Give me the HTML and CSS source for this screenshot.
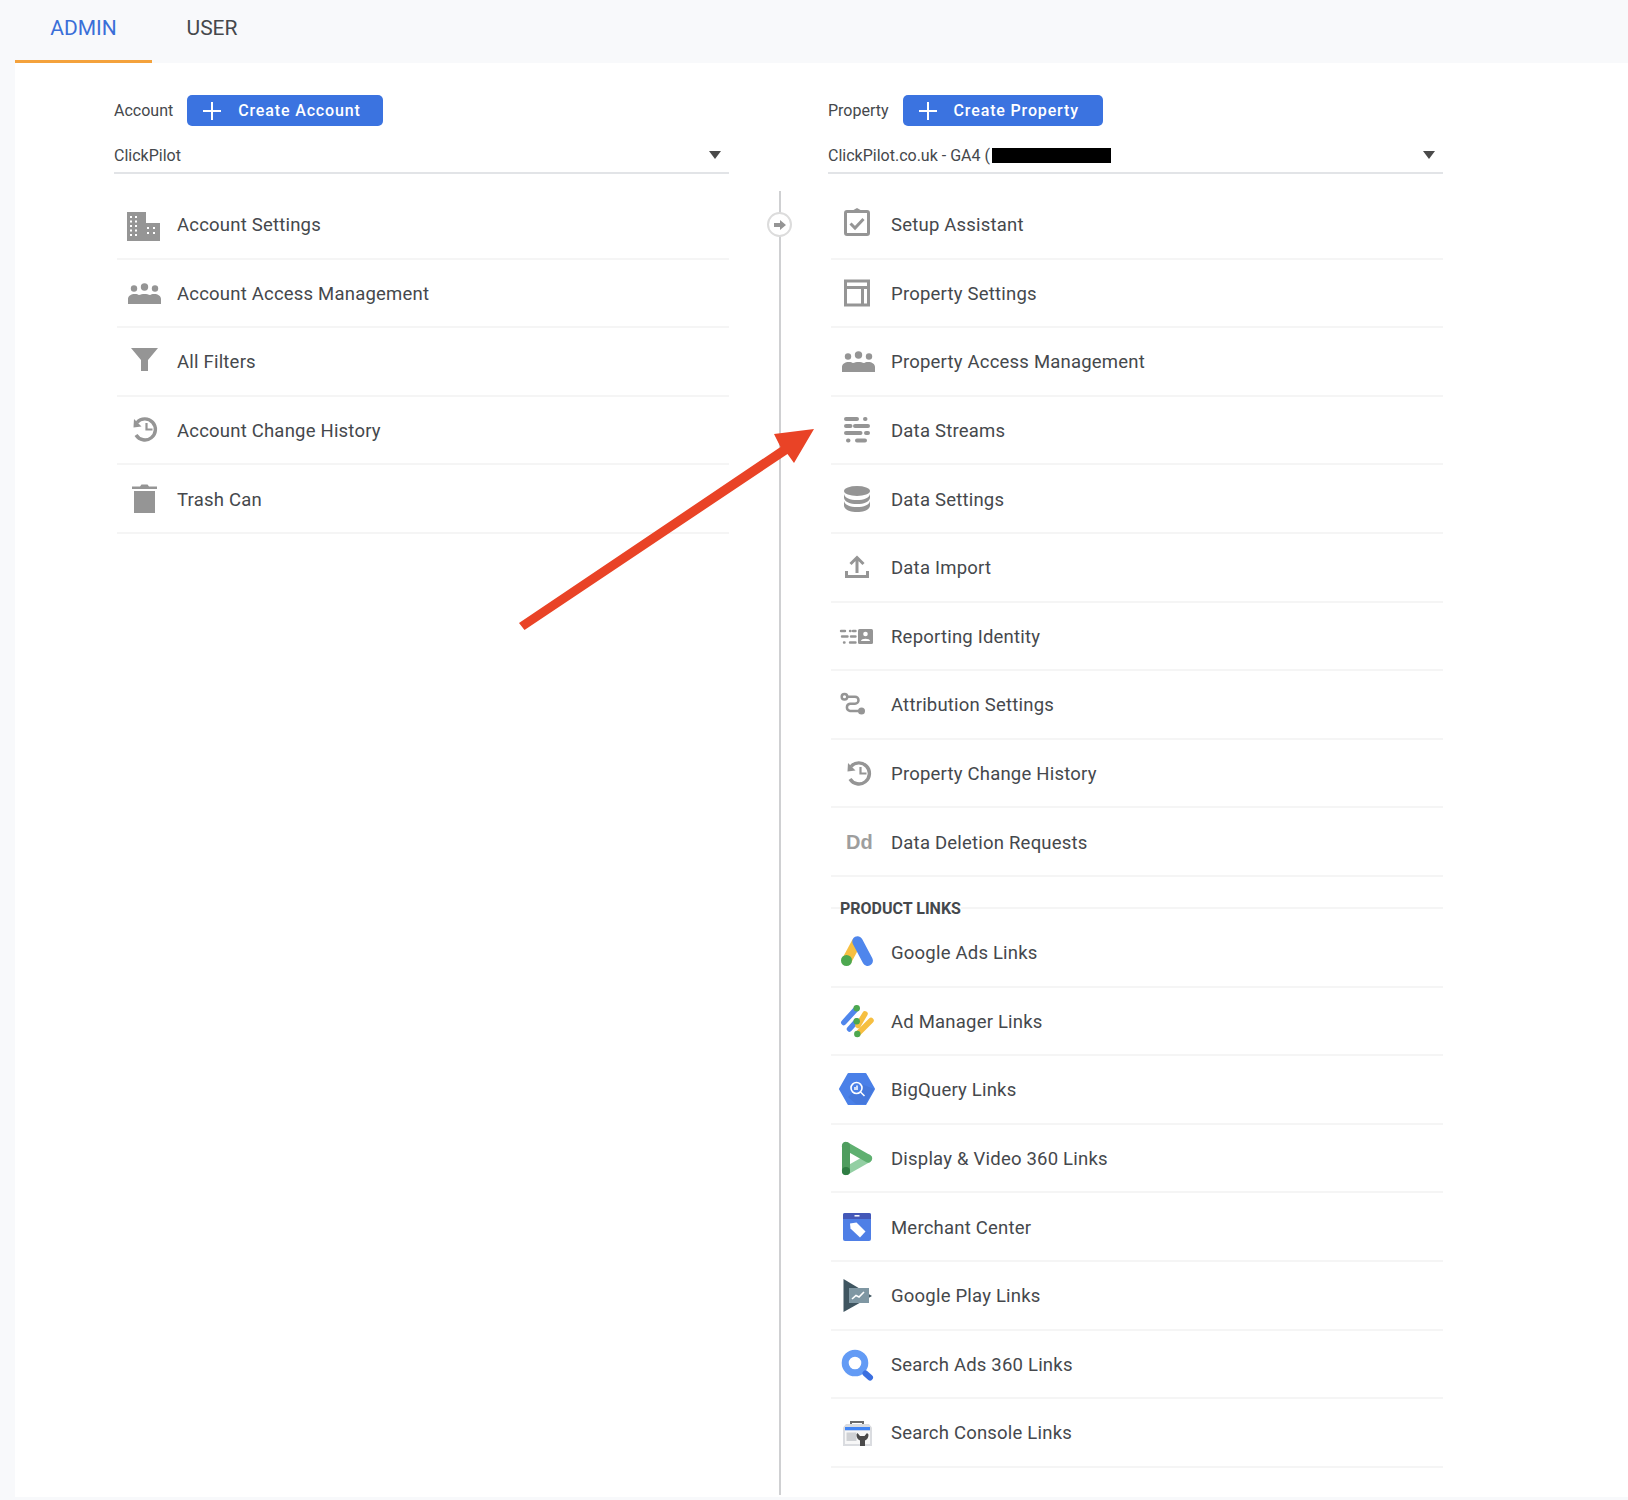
FILE: index.html
```html
<!DOCTYPE html>
<html lang="en">
<head>
    <meta charset="UTF-8">
    <title>Admin - Analytics</title>
    <link rel="stylesheet" href="styles.css">
</head>
<body>
    <div class="tabs">
        <div class="tab active">ADMIN</div>
        <div class="tab">USER</div>
    </div>

    <div class="main">
        <!-- Account column -->
        <div class="column">
            <div class="column-head">
                <span class="column-label">Account</span>
                <button class="btn btn-account">
                    <svg class="btn-plus" viewBox="0 0 18 18"><path d="M9 0v18M0 9h18"/></svg>
                    Create Account
                </button>
            </div>
            <div class="picker">
                <span>ClickPilot</span>
                <span class="caret"></span>
            </div>
            <div class="list">
                <div class="row">
                    <div class="icon">
                        <svg viewBox="0 0 36 36"><path class="fill" d="M1 6h19v11h14v18H1z"/><path class="holes" d="M4 10h2v2H4zM9 10h2v2H9zM4 14.500h2v2H4zM9 14.500h2v2H9zM4 19h2v2H4zM9 19h2v2H9zM4 23.500h2v2H4zM9 23.500h2v2H9zM4 28h2v2H4zM9 28h2v2H9zM21 21h2v2h-2zM27 21h2v2h-2zM21 26h2v2h-2zM27 26h2v2h-2z"/></svg>
                    </div>
                    <span>Account Settings</span>
                </div>
                <div class="row">
                    <div class="icon"><svg viewBox="0 0 36 36"><use href="#people"/></svg></div>
                    <span>Account Access Management</span>
                </div>
                <div class="row">
                    <div class="icon">
                        <svg viewBox="0 0 36 36"><path class="fill" d="M5 5h27l-10 12v11h-7V17z"/></svg>
                    </div>
                    <span>All Filters</span>
                </div>
                <div class="row">
                    <div class="icon"><svg viewBox="0 0 36 36"><use href="#history"/></svg></div>
                    <span>Account Change History</span>
                </div>
                <div class="row">
                    <div class="icon">
                        <svg viewBox="0 0 36 36"><path class="fill" d="M8 10h21v22H8zM6 5.500h8l1.500-2h6l1.500 2h8V8H6z"/></svg>
                    </div>
                    <span>Trash Can</span>
                </div>
            </div>
        </div>

        <div class="divider">
            <div class="divider-knob">
                <svg viewBox="0 0 12 10"><path class="fill" d="M0 3h6V0l6 5-6 5V7H0z"/></svg>
            </div>
        </div>

        <!-- Property column -->
        <div class="column">
            <div class="column-head">
                <span class="column-label">Property</span>
                <button class="btn btn-property">
                    <svg class="btn-plus" viewBox="0 0 18 18"><path d="M9 0v18M0 9h18"/></svg>
                    Create Property
                </button>
            </div>
            <div class="picker">
                <span>ClickPilot.co.uk - GA4 (<span class="redacted"></span></span>
                <span class="caret"></span>
            </div>
            <div class="list">
                <div class="row">
                    <div class="icon">
                        <svg viewBox="0 0 36 36"><rect class="line thick" x="5.500" y="5.500" width="23" height="23" rx="1.500"/><path class="fill" d="M12.500 7l1-3 3.500-2 3.500 2 1 3z"/><path class="line thick" d="M10.500 17.500l4.500 4.500 8.500-9"/></svg>
                    </div>
                    <span>Setup Assistant</span>
                </div>
                <div class="row">
                    <div class="icon">
                        <svg viewBox="0 0 36 36"><path class="line thick" d="M5.500 6h23v24h-23zM5.500 12.500h23M22.500 12.500V30"/></svg>
                    </div>
                    <span>Property Settings</span>
                </div>
                <div class="row">
                    <div class="icon"><svg viewBox="0 0 36 36"><use href="#people"/></svg></div>
                    <span>Property Access Management</span>
                </div>
                <div class="row">
                    <div class="icon">
                        <svg viewBox="0 0 36 36"><path class="dash" d="M6 7h11M25 7h.500M6 14h4.500M15 14h13M6 21h14.500M26 21h2M8 28.500h.500M17 28.500h8"/></svg>
                    </div>
                    <span>Data Streams</span>
                </div>
                <div class="row">
                    <div class="icon">
                        <svg viewBox="0 0 36 36"><ellipse class="fill" cx="17" cy="10" rx="13" ry="5"/><path class="fill" d="M4 13c1 4 6 6 13 6s12-2 13-6v4c-1 4-6 6-13 6s-12-2-13-6zM4 20c1 4 6 6 13 6s12-2 13-6v5c-1 4-6 6-13 6s-12-2-13-6z"/></svg>
                    </div>
                    <span>Data Settings</span>
                </div>
                <div class="row">
                    <div class="icon">
                        <svg viewBox="0 0 36 36"><path class="line thick" d="M6.500 22v5.500h21V22M17 24V9.500M10.500 15L17 8.500l6.500 6.500"/></svg>
                    </div>
                    <span>Data Import</span>
                </div>
                <div class="row">
                    <div class="icon">
                        <svg viewBox="0 0 36 36"><path class="dash-thin" d="M1 13h4M10 13h.500M13 13h2.500M2 18.500h5.500M11 18.500h4.500M4 24.500h.500M10 24.500h5.500"/><rect class="fill" x="18" y="11" width="15" height="15" rx="1.500"/><circle class="holes" cx="25.500" cy="16" r="2.300"/><path class="holes" d="M21 23c0-3 9-3 9 0z"/></svg>
                    </div>
                    <span>Reporting Identity</span>
                </div>
                <div class="row">
                    <div class="icon">
                        <svg viewBox="0 0 36 36"><circle class="line" cx="4.500" cy="10.700" r="2.800"/><circle class="fill" cx="21.500" cy="25" r="3.500"/><path class="line" d="M7 10.700h8a3.500 3.500 0 0 1 0 7h-5a3.700 3.700 0 0 0 0 7.300h9"/></svg>
                    </div>
                    <span>Attribution Settings</span>
                </div>
                <div class="row">
                    <div class="icon"><svg viewBox="0 0 36 36"><use href="#history" x="0" y="1"/></svg></div>
                    <span>Property Change History</span>
                </div>
                <div class="row">
                    <div class="icon dd">Dd</div>
                    <span>Data Deletion Requests</span>
                </div>
            </div>

            <div class="section-head"><b>PRODUCT LINKS</b></div>
            <div class="list">
                <div class="row">
                    <div class="icon">
                        <svg viewBox="0 0 36 36"><path class="logo" stroke="#f6bf41" stroke-width="10" d="M17 7.500L6.500 27"/><path class="logo round" stroke="#4f86ec" stroke-width="10.500" d="M17.500 7.500L27.700 26.700"/><circle cx="6.500" cy="26.500" r="5.500" fill="#4da84f"/></svg>
                    </div>
                    <span>Google Ads Links</span>
                </div>
                <div class="row">
                    <div class="icon">
                        <svg viewBox="0 0 36 36"><g class="logo round" stroke-width="5.500"><path stroke="#4f86ec" d="M3.800 19.500L16.700 5.300M9.500 26L16.700 18"/><path stroke="#f6bf41" d="M18 22.500L25 10.800M17.500 31L31 17.500"/></g><g fill="#4da84f"><circle cx="16.700" cy="5.300" r="3.200"/><circle cx="16.700" cy="18.300" r="3.200"/><circle cx="17.300" cy="31" r="3.200"/></g></svg>
                    </div>
                    <span>Ad Manager Links</span>
                </div>
                <div class="row">
                    <div class="icon">
                        <svg viewBox="0 0 36 36"><path fill="#4a80e8" stroke="#4a80e8" stroke-width="2" stroke-linejoin="round" d="M0 18L8.500 3h17L34 18l-8.500 15h-17z"/><path fill="#3f6fd0" d="M21 13l13 5-8.500 15H16l-8-7z" opacity=".5"/><circle cx="16.500" cy="17" r="5.500" fill="#4a80e8" stroke="#fff" stroke-width="1.600"/><path stroke="#fff" stroke-width="1.500" d="M15 16v3M17 14.500V19M20.500 21l4 4" fill="none"/></svg>
                    </div>
                    <span>BigQuery Links</span>
                </div>
                <div class="row">
                    <div class="icon">
                        <svg viewBox="0 0 36 36"><path class="logo round" stroke="#93cfa3" stroke-width="8" d="M28 18.500L6 31"/><path class="logo round" stroke="#5fb070" stroke-width="8" d="M6 6L28 18.500"/><path class="logo round" stroke="#4f9d5f" stroke-width="8" d="M6 6V31"/><circle cx="6" cy="31" r="4" fill="#2f7d43"/></svg>
                    </div>
                    <span>Display &amp; Video 360 Links</span>
                </div>
                <div class="row">
                    <div class="icon">
                        <svg viewBox="0 0 36 36"><rect x="3" y="4" width="28" height="28" rx="2" fill="#4f7fe6"/><path fill="#4458b8" d="M3 6a2 2 0 0 1 2-2h24a2 2 0 0 1 2 2v4H3z"/><path stroke="#fff" stroke-width="1.500" d="M14.500 6.800h5"/><path fill="#fff" d="M10 14.500l6.500-1 9 9-5.500 6-9.500-9z"/></svg>
                    </div>
                    <span>Merchant Center</span>
                </div>
                <div class="row">
                    <div class="icon">
                        <svg viewBox="0 0 36 36"><path fill="#3f5560" d="M3.500 2L32 19 3.500 35z"/><path fill="#7f97a3" d="M9 11h20v15H9z"/><path class="logo" stroke="#fff" stroke-width="1.600" d="M12 22l4-3.500 3 1.500 5-5"/></svg>
                    </div>
                    <span>Google Play Links</span>
                </div>
                <div class="row">
                    <div class="icon">
                        <svg viewBox="0 0 36 36"><circle cx="15" cy="17" r="9.800" fill="none" stroke="#639bf5" stroke-width="7"/><path class="logo round" stroke="#3b6fe0" stroke-width="6" d="M25.500 27.500l4.500 4"/></svg>
                    </div>
                    <span>Search Ads 360 Links</span>
                </div>
                <div class="row">
                    <div class="icon">
                        <svg viewBox="0 0 36 36"><path fill="none" stroke="#6b6b6b" stroke-width="2" d="M11 11V8h12v3"/><path fill="#dadce0" d="M3 13.500L6 10h23l3 3.500V32H3z"/><path fill="#4285f4" d="M5 13h25v3.500H5z"/><path fill="#f7f7f7" d="M5 16.500h25V30H5z"/><path fill="#cfd1d4" d="M6.500 18.500h10V27h-10z"/><path fill="#4a4a4a" d="M17.500 19l2.500 3h4.500l2.500-3 1.500 1.500c0 3-1 5-3.500 6V32h-5v-5.500c-2.500-1-3.500-3-3.500-6z"/></svg>
                    </div>
                    <span>Search Console Links</span>
                </div>
            </div>
        </div>
    </div>

    <!-- callout drawn over the screenshot -->
    <svg class="callout" viewBox="0 0 320 230">
        <path fill="#e94326" d="M5 207L266.500 31 260 18 300 13 280 47 273.500 38 10.500 214z"/>
    </svg>

    <!-- shared icons -->
    <svg class="defs">
        <symbol id="people" viewBox="0 0 36 36">
            <g fill="#959595">
                <circle cx="8" cy="13.500" r="3.200"/><circle cx="18.500" cy="12" r="3.700"/><circle cx="29" cy="13.500" r="3.200"/>
                <path d="M2 29v-5c0-3 3-5 7-5 2 0 3 .500 4 1 3-1.500 8-1.500 11 0 1-.500 2-1 4-1 4 0 7 2 7 5v5z"/>
            </g>
        </symbol>
        <symbol id="history" viewBox="0 0 36 36">
            <path fill="none" stroke="#959595" stroke-width="3.400" d="M11 10.500a10.500 10.500 0 1 1-1 12.500"/>
            <path fill="#959595" d="M8 7l7.500 7.500L7.500 15.500z"/>
            <path fill="none" stroke="#959595" stroke-width="2.200" d="M20.500 11v6.500h6"/>
        </symbol>
    </svg>
</body>
</html>
```

FILE: styles.css
```css
* {
    margin: 0;
    padding: 0;
    box-sizing: border-box;
}

body {
    font-family: Roboto, "Liberation Sans", sans-serif;
    background: #f8f9fb;
    color: #45484c;
    position: relative;
    height: 1500px;
    overflow: hidden;
}

.tabs {
    display: flex;
    height: 63px;
    padding-left: 15px;
}

.tab {
    width: 120px;
    padding-top: 16px;
    font-size: 21px;
    text-align: center;
}

.tab.active {
    width: 137px;
    color: #3a6fd8;
    border-bottom: 3px solid #f4a23c;
}

.main {
    display: flex;
    height: 1434px;
    margin-left: 15px;
    padding-left: 99px;
    background: #fff;
}

.column {
    width: 615px;
    padding-top: 32px;
}

.column-head {
    display: flex;
    align-items: center;
    height: 31px;
}

.column-label {
    font-size: 16px;
}

.btn {
    display: flex;
    align-items: center;
    height: 31px;
    margin-left: 14px;
    padding-left: 16px;
    background: #3b73e0;
    color: #fff;
    border: none;
    border-radius: 5px;
    font-family: inherit;
    font-size: 16px;
    font-weight: 500;
    letter-spacing: .85px;
}

.btn-account { width: 196px; }
.btn-property { width: 200px; }

.btn-plus {
    width: 18px;
    height: 18px;
    margin-right: 17px;
}

.btn-plus path {
    stroke: #fff;
    stroke-width: 2;
}

.picker {
    display: flex;
    justify-content: space-between;
    align-items: center;
    height: 36px;
    margin-top: 12px;
    padding-right: 8px;
    border-bottom: 2px solid #e2e4e7;
    font-size: 16px;
}

.redacted {
    display: inline-block;
    width: 119px;
    height: 15px;
    margin-left: 2px;
    background: #000;
    vertical-align: -2px;
}

.caret {
    width: 0;
    height: 0;
    border-left: 6.500px solid transparent;
    border-right: 6.500px solid transparent;
    border-top: 8px solid #4a4a4a;
}

.list {
    margin-left: 3px;
}

.column-head + .picker + .list {
    margin-top: 17px;
}

.row {
    display: flex;
    align-items: center;
    height: 68.600px;
    padding-left: 9px;
    border-bottom: 2px solid #f5f5f5;
    font-size: 18.500px;
    letter-spacing: .21px;
}

.row > span {
    margin-top: 2px;
}

.icon {
    width: 36px;
    height: 36px;
    margin-right: 15px;
    flex-shrink: 0;
}

.icon svg {
    display: block;
    width: 36px;
    height: 36px;
    overflow: visible;
}

.dd {
    padding-left: 6px;
    font-family: "Liberation Sans", sans-serif;
    font-size: 20px;
    font-weight: 700;
    letter-spacing: 0;
    line-height: 36px;
    color: #9e9e9e;
}

.fill { fill: #959595; }
.holes { fill: #fff; }

.line {
    fill: none;
    stroke: #959595;
    stroke-width: 2.500;
}

.thick {
    stroke-width: 3;
}

.dash, .dash-thin {
    fill: none;
    stroke: #959595;
    stroke-linecap: round;
}

.dash { stroke-width: 4; }
.dash-thin { stroke-width: 2.400; }

.logo {
    fill: none;
}

.round {
    stroke-linecap: round;
}

.section-head {
    display: flex;
    align-items: center;
    height: 42px;
    margin-left: 3px;
    padding-top: 21px;
    font-size: 16px;
}

.section-head::before {
    content: "";
    width: 9px;
    height: 2px;
    background: #f5f5f5;
}

.section-head::after {
    content: "";
    flex: 1;
    height: 2px;
    background: #f5f5f5;
}

.divider {
    position: relative;
    width: 99px;
    margin-top: 128px;
    margin-bottom: 2px;
}

.divider::before {
    content: "";
    display: block;
    width: 2px;
    height: 100%;
    margin-left: 50px;
    background: #cfd0d2;
}

.divider-knob {
    position: absolute;
    top: 21px;
    left: 38px;
    display: flex;
    align-items: center;
    justify-content: center;
    width: 25px;
    height: 25px;
    background: #fff;
    border: 2px solid #dcdcdc;
    border-radius: 50%;
}

.divider-knob svg {
    width: 12px;
    height: 10px;
}

.callout {
    position: absolute;
    top: 416px;
    left: 514px;
    width: 320px;
    height: 230px;
}

.defs {
    display: none;
}
```
